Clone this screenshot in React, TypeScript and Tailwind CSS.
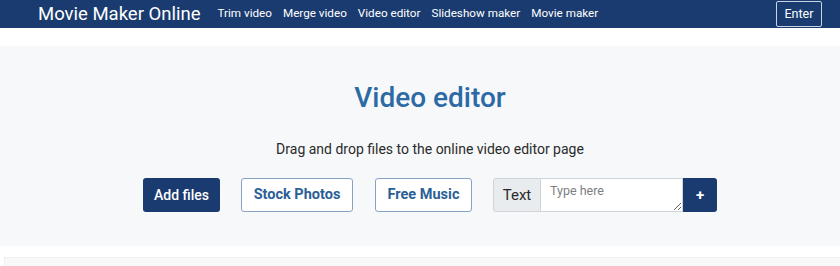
const links = ["Trim video", "Merge video", "Video editor", "Slideshow maker", "Movie maker"];

export default function App() {
  return (
    <div className="w-[840px] h-[266px] overflow-hidden bg-white font-['Roboto',sans-serif]">
      <nav className="h-[28px] bg-[#1a3b6f] flex items-center pl-[38px] pr-[18px]">
        <span className="text-white text-[18.5px] leading-none">Movie Maker Online</span>
        <ul className="flex items-center gap-[11px] ml-[17px]">
          {links.map((l) => (
            <li key={l} className="text-white text-[11.7px] leading-none">
              {l}
            </li>
          ))}
        </ul>
        <button className="ml-auto h-[26px] w-[46px] border border-[#c9d3e2] rounded-[2px] text-white text-[12.5px] leading-none">
          Enter
        </button>
      </nav>

      <section className="mt-[18px] h-[200px] pl-[20px] bg-[#f7f8fa] flex flex-col items-center">
        <h1 className="mt-[36px] text-[28px] leading-[32px] font-medium text-[#2c6aa5]">Video editor</h1>
        <p className="mt-[26px] text-[14px] leading-[18px] text-[#2a2a2a]">
          Drag and drop files to the online video editor page
        </p>
        <div className="mt-[20px] flex items-center">
          <button className="h-[34px] w-[77px] bg-[#1a3b6f] rounded-[3px] text-white text-[14px] font-medium">
            Add files
          </button>
          <button className="ml-[21px] h-[34px] w-[112px] border border-[#86a3c4] rounded-[3px] bg-white text-[#2b5f96] text-[14.5px] font-bold">
            Stock Photos
          </button>
          <button className="ml-[22px] h-[34px] w-[97px] border border-[#86a3c4] rounded-[3px] bg-white text-[#2b5f96] text-[14.5px] font-bold">
            Free Music
          </button>
          <div className="ml-[21px] flex h-[34px]">
            <span className="w-[48px] flex items-center justify-center bg-[#e9ecef] border border-[#ced4da] rounded-l-[3px] text-[15px] text-[#2a2a2a]">
              Text
            </span>
            <textarea
              placeholder="Type here"
              className="w-[142px] h-[34px] border border-l-0 border-[#ced4da] bg-white px-[9px] pt-[4px] text-[12.5px] leading-[16px] placeholder:text-[#7a7f85] outline-none"
            />
            <button className="w-[34px] bg-[#1a3b6f] rounded-r-[3px] text-white text-[15px] font-bold">+</button>
          </div>
        </div>
      </section>

      <div className="mt-[11px] ml-[4px] h-[20px] bg-[#f8f8f8] border-l border-t border-[#f0f0f0]" />
    </div>
  );
}
